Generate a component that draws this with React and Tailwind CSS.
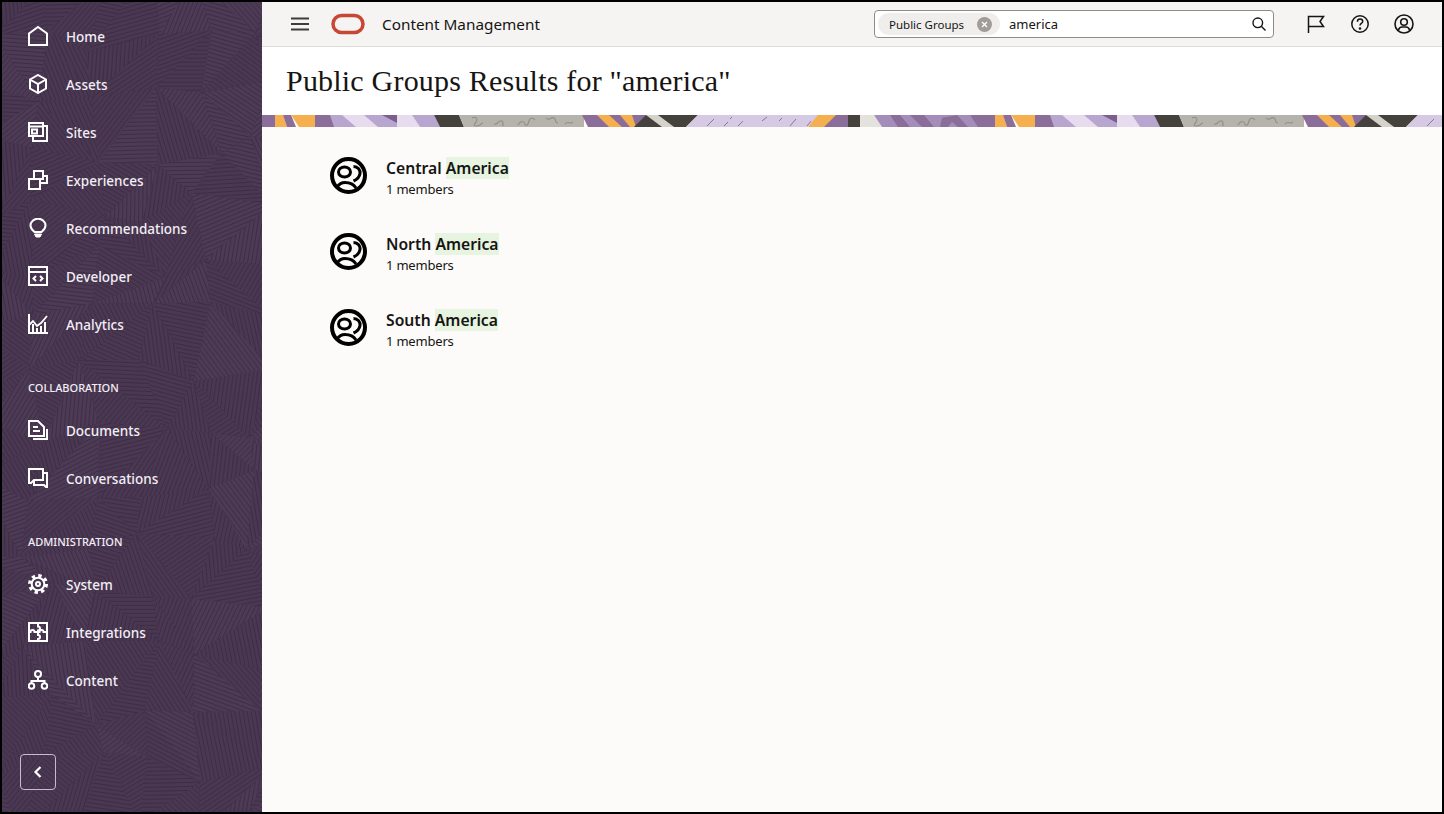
import React from "react";

// seeded so the sidebar texture is the same on every load
function makeRandom(seed) {
  let s = seed;
  return () => {
    s = (s * 16807) % 2147483647;
    return (s - 1) / 2147483646;
  };
}

function buildShards() {
  const rand = makeRandom(4711);
  const size = 56;
  const cols = 6;
  const rows = 17;
  const pts = [];
  for (let r = 0; r <= rows; r++) {
    const row = [];
    for (let c = 0; c <= cols; c++) {
      row.push([c * size - 20 + rand() * 34 - 17, r * size - 20 + rand() * 34 - 17]);
    }
    pts.push(row);
  }
  const shards = [];
  for (let r = 0; r < rows; r++) {
    for (let c = 0; c < cols; c++) {
      const a = pts[r][c];
      const b = pts[r][c + 1];
      const d = pts[r + 1][c + 1];
      const e = pts[r + 1][c];
      const tris = rand() > 0.5 ? [[a, b, d], [a, d, e]] : [[a, b, e], [b, d, e]];
      tris.forEach((t) => {
        const cx = (t[0][0] + t[1][0] + t[2][0]) / 3;
        const cy = (t[0][1] + t[1][1] + t[2][1]) / 3;
        const angle = rand() * Math.PI;
        const dx = Math.cos(angle);
        const dy = Math.sin(angle);
        const lines = [];
        for (let o = -72; o <= 72; o += 4) {
          const mx = cx - dy * o;
          const my = cy + dx * o;
          lines.push(
            `M${(mx - dx * 90).toFixed(1)} ${(my - dy * 90).toFixed(1)}L${(mx + dx * 90).toFixed(1)} ${(my + dy * 90).toFixed(1)}`
          );
        }
        shards.push({
          poly: t.map((p) => p.map((v) => v.toFixed(1)).join(",")).join(" "),
          d: lines.join(""),
          tone: rand() > 0.7 ? "#4d3b55" : "#4a3852",
        });
      });
    }
  }
  return shards;
}

const shards = buildShards();

function SidebarTexture() {
  return (
    <svg className="absolute inset-0 h-full w-full" width="260" height="810" aria-hidden="true">
      <defs>
        {shards.map((s, i) => (
          <clipPath id={`shard${i}`} key={i}>
            <polygon points={s.poly} />
          </clipPath>
        ))}
      </defs>
      {shards.map((s, i) => (
        <g key={i} clipPath={`url(#shard${i})`}>
          <polygon points={s.poly} fill={s.tone} />
          <path d={s.d} stroke="#3b2a42" strokeWidth="1" fill="none" opacity="0.8" />
        </g>
      ))}
    </svg>
  );
}

function BannerTile({ x }) {
  const purple = "#8a6d98";
  const orange = "#f6af4f";
  const lav = "#b9a6d0";
  const pale = "#e7dbee";
  const dark = "#45423d";
  const gray = "#b6b3ac";
  const mid = "#a48dbb";
  return (
    <g transform={`translate(${x} 0)`}>
      <rect x="0" y="0" width="14" height="12" fill={purple} />
      <polygon points="13,0 21,0 25,12 13,12" fill={orange} />
      <polygon points="21,0 29,0 34,12 25,12" fill={purple} />
      <polygon points="29,0 53,0 53,12 37,12" fill={orange} />
      <rect x="53" y="0" width="19" height="12" fill={purple} />
      <polygon points="68,0 82,0 96,12 72,12" fill={lav} />
      <polygon points="80,0 104,0 118,12 94,12" fill={pale} />
      <polygon points="102,0 136,0 136,12 116,12" fill={lav} />
      <polygon points="120,0 135,0 135,8" fill="#7c5f8f" />
      <polygon points="135,0 150,0 158,12 135,12" fill={pale} />
      <polygon points="150,0 172,0 178,12 158,12" fill={lav} />
      <polygon points="172,0 197,0 202,12 178,12" fill={dark} />
      <polygon points="197,0 322,0 322,12 202,12" fill={gray} />
      <path
        d="M210 3c4-2 6 1 4 4s-3 4 1 4 4-3 6-3M232 9c3 2 5-5 8-3s-2 5 2 4M256 10c3-5 6-4 7-1s3 1 4-3 5-3 6-1M284 3c3 4 5-2 8 0s0 5 4 5M303 9c3-4 5 1 8-2"
        stroke="#918e88"
        strokeWidth="1.100"
        fill="none"
      />
      <polygon points="320,0 394,0 380,12 326,12" fill={purple} />
      <polygon points="335,0 347,0 360,12 347,12" fill={orange} />
      <polygon points="358,0 370,0 374,12 368,12" fill={orange} />
      <polygon points="372,12 384,0 396,0 404,12" fill={dark} />
      <polygon points="384,0 396,0 412,12 400,12" fill="#d5d2cb" />
      <polygon points="396,0 436,0 424,12 412,12" fill={dark} />
      <polygon points="436,0 558,0 546,12 424,12" fill="#d6c9e4" />
      <path
        d="M445 11l7-7M462 11l4-4M476 11l5-5M505 2l-5 4M520 3l-3 3M528 11l6-7M545 11l4-5M470 2l-2 2"
        stroke="#8e74a3"
        strokeWidth="1"
        fill="none"
      />
      <polygon points="556,0 586,0 586,12 546,12" fill={orange} />
      <polygon points="574,0 586,0 586,12 562,12" fill={purple} />
      <rect x="586" y="0" width="12" height="12" fill={dark} />
      <polygon points="598,0 612,0 620,12 598,12" fill="#e4e2dd" />
      <polygon points="612,0 708,0 722,12 620,12" fill={mid} />
      <polygon points="628,0 638,0 648,12 636,12" fill={purple} />
      <polygon points="648,0 662,0 672,12 660,12" fill={purple} />
      <polygon points="680,3 695,0 706,12 696,12 690,7 686,12 678,12" fill={purple} />
      <polygon points="708,0 720,0 720,12 716,12" fill={purple} />
    </g>
  );
}

function Banner() {
  return (
    <svg className="block h-3 w-full" viewBox="0 0 1180 12" preserveAspectRatio="none" aria-hidden="true">
      <BannerTile x="0" />
      <BannerTile x="720" />
    </svg>
  );
}

const Nav = ({ children }) => (
  <svg width="20" height="20" viewBox="0 0 20 20" fill="none" stroke="white" strokeWidth="2" className="shrink-0">
    {children}
  </svg>
);

const icons = {
  home: <path d="M1 19V7.500L10 1l9 6.500V19z" />,
  assets: <path d="M10 1l8 4.500v9L10 19l-8-4.500v-9zM2 5.500l8 4.500 8-4.500M10 10v9" />,
  sites: (
    <>
      <path d="M1 1h14v13H1z" />
      <path d="M15 4h4v15H5v-5" />
      <path d="M1 4.500h13M4 7.500h5v4H4z" />
    </>
  ),
  experiences: (
    <>
      <path d="M1 9h11v10H1z" />
      <path d="M6 9V1h9v5h4v7h-7M12 9h3V6" />
    </>
  ),
  recommendations: (
    <>
      <path d="M6.500 14C4 12 2.500 10.500 2.500 7.500a7.500 6.800 0 0 1 15 0c0 3-1.500 4.500-4 6.500z" />
      <path d="M6.500 16h7l-1.500 3H8z" fill="white" strokeWidth="1" />
    </>
  ),
  developer: (
    <>
      <path d="M1 1h18v18H1zM1 6h18" />
      <path d="M8 10l-2.500 2.500L8 15M12 10l2.500 2.500L12 15" />
    </>
  ),
  analytics: (
    <>
      <path d="M1 0v19h19" />
      <path d="M1 11l4-4 4 5 4-3 6-7" strokeWidth="1.800" />
      <path d="M5 10v8M9 14v4M13 12v6M17 8v10" strokeWidth="2" />
    </>
  ),
  documents: (
    <>
      <path d="M1 1h9l6 6v9H1z" />
      <path d="M19 9v10H5M5 7h5M5 11h7" />
    </>
  ),
  conversations: (
    <>
      <path d="M1 1h14v11H6l-3 3H1z" />
      <path d="M15 5h4v15l-3-3H6v-5" />
    </>
  ),
  system: (
    <>
      <circle cx="10" cy="10" r="8.300" strokeWidth="3.400" strokeDasharray="3.300 3.220" />
      <circle cx="10" cy="10" r="6.300" strokeWidth="2" />
      <circle cx="10" cy="10" r="2" strokeWidth="2" />
    </>
  ),
  integrations: (
    <>
      <path d="M1 1h18v18H1z" />
      <path d="M10 1v3.500a2 2 0 0 1 0 4V10H6.500a2 2 0 0 0-4 0H1" />
      <path d="M19 10h-3.500a2 2 0 0 0-4 0H10v3a2 2 0 0 1 0 4v2" />
    </>
  ),
  content: (
    <>
      <circle cx="10" cy="4" r="3" />
      <circle cx="3.500" cy="16" r="2.800" />
      <circle cx="16.500" cy="16" r="2.800" />
      <path d="M10 7v4M3.500 13v-2h13v2" />
    </>
  ),
};

function NavItem({ icon, label }) {
  return (
    <a className="flex h-12 items-center pl-[26px] text-[13.500px] font-medium text-[#f3eef5]">
      <Nav>{icons[icon]}</Nav>
      <span className="ml-[18px] pt-[2px]">{label}</span>
    </a>
  );
}

function SectionLabel({ children, className }) {
  return (
    <div className={`pl-[26px] text-[11px] leading-4 font-medium text-[#f3eef5] ${className}`}>{children}</div>
  );
}

function GroupIcon() {
  return (
    <svg width="37" height="37" viewBox="0 0 37 37" fill="none" stroke="black" className="shrink-0">
      <circle cx="18.500" cy="18.500" r="16.500" strokeWidth="4" />
      <ellipse cx="14.500" cy="15" rx="6" ry="5" strokeWidth="3" />
      <path d="M23.500 9.500c4.500 0 7 3.500 6.500 7-.5 3.500-3 6-6.500 7.500" strokeWidth="3" />
      <path d="M7 30c2-3 4-4.500 8-4.500s8 .5 11 5.500" strokeWidth="3" />
    </svg>
  );
}

function ResultRow({ name }) {
  return (
    <div className="flex items-start gap-[19px]">
      <GroupIcon />
      <div className="pt-px">
        <div className="text-[15.700px] leading-[21px] font-semibold text-[#161513]">
          {name} <mark className="bg-[#e6f4e0] text-[#161513]">America</mark>
        </div>
        <div className="text-[13px] leading-[21px] tracking-[-0.2px] text-[#161513]">1 members</div>
      </div>
    </div>
  );
}

export default function App() {
  return (
    <div className="flex h-screen w-screen overflow-hidden border-2 border-black bg-[#fcfbfa] font-['Noto_Sans',sans-serif]">
      {/* Sidebar */}
      <aside className="relative flex w-[260px] shrink-0 flex-col bg-[#4a3852]">
        <SidebarTexture />
        <div className="relative flex h-full flex-col pt-[10px]">
          <NavItem icon="home" label="Home" />
          <NavItem icon="assets" label="Assets" />
          <NavItem icon="sites" label="Sites" />
          <NavItem icon="experiences" label="Experiences" />
          <NavItem icon="recommendations" label="Recommendations" />
          <NavItem icon="developer" label="Developer" />
          <NavItem icon="analytics" label="Analytics" />
          <SectionLabel className="mt-[32px] mb-[10px]">COLLABORATION</SectionLabel>
          <NavItem icon="documents" label="Documents" />
          <NavItem icon="conversations" label="Conversations" />
          <SectionLabel className="mt-[32px] mb-[10px]">ADMINISTRATION</SectionLabel>
          <NavItem icon="system" label="System" />
          <NavItem icon="integrations" label="Integrations" />
          <NavItem icon="content" label="Content" />
          <button className="mt-auto mb-[22px] ml-[18px] flex h-9 w-9 items-center justify-center rounded-[4px] border border-[#c9b9d2]">
            <svg width="12" height="14" viewBox="0 0 12 14" fill="none" stroke="white" strokeWidth="2.200">
              <path d="M8.500 2L3.500 7l5 5" />
            </svg>
          </button>
        </div>
      </aside>

      <div className="flex min-w-0 flex-1 flex-col">
        {/* Top bar */}
        <header className="flex h-[45px] shrink-0 items-center border-b border-[#dedcd9] bg-[#f5f4f2]">
          <svg className="ml-[29px]" width="18" height="14" viewBox="0 0 18 14" stroke="#3f3d3a" strokeWidth="2">
            <path d="M0 1.500h18M0 7h18M0 12.500h18" />
          </svg>
          <svg className="ml-[22px]" width="34" height="22" viewBox="0 0 34 22" fill="none" stroke="#c74634" strokeWidth="3.500">
            <rect x="2" y="2.500" width="30" height="17" rx="8.500" />
          </svg>
          <span className="ml-[17px] text-[15.300px] text-[#161513]">Content Management</span>
          <div className="ml-auto flex h-[28px] w-[400px] items-center rounded-[4px] border border-[#8f8c88] bg-white pr-[7px] pl-[3px]">
            <div className="flex h-[22px] w-[122px] items-center rounded-full bg-[#efeeec] pl-[11px]">
              <span className="pt-[2px] text-[11.500px] text-[#161513]">Public Groups</span>
              <span className="mr-[8px] ml-auto flex h-[15px] w-[15px] items-center justify-center rounded-full bg-[#a09d99]">
                <svg width="7" height="7" viewBox="0 0 7 7" stroke="white" strokeWidth="1.300">
                  <path d="M1 1l5 5M6 1L1 6" />
                </svg>
              </span>
            </div>
            <span className="ml-[9px] pt-[2px] text-[13px] text-[#161513]">america</span>
            <svg className="ml-auto" width="14" height="14" viewBox="0 0 14 14" fill="none" stroke="#161513" strokeWidth="1.400">
              <circle cx="5.800" cy="5.800" r="4.800" />
              <path d="M9.300 9.300L13.500 13.500" />
            </svg>
          </div>
          <div className="mr-[28px] ml-[32px] flex items-center gap-[24px]">
            <svg width="20" height="20" viewBox="0 0 20 20" fill="none" stroke="#161513" strokeWidth="1.500">
              <path d="M2.500 19V2.500h15l-3.500 5 3.500 5h-15" />
            </svg>
            <svg width="20" height="20" viewBox="0 0 20 20" fill="none" stroke="#161513" strokeWidth="1.500">
              <circle cx="10" cy="10" r="8.200" />
              <path d="M7.400 7.800c0-1.700 1.200-2.700 2.700-2.700s2.600 1 2.600 2.300c0 2-2.700 2-2.700 4" />
              <circle cx="10" cy="14.500" r=".6" fill="#161513" />
            </svg>
            <svg width="20" height="20" viewBox="0 0 20 20" fill="none" stroke="#161513" strokeWidth="1.600">
              <circle cx="10" cy="10" r="9" />
              <circle cx="10" cy="8" r="3.300" />
              <path d="M4.500 16c.5-2 2-3 3.500-3h4c1.500 0 3 1 3.500 3" />
            </svg>
          </div>
        </header>

        {/* Title */}
        <div className="flex h-[68px] shrink-0 items-center bg-white pb-[2px] pl-6">
          <h1 className="font-['Liberation_Serif',serif] text-[30px] tracking-[0.2px] text-[#161513]">
            Public Groups Results for "america"
          </h1>
        </div>
        <Banner />

        {/* Results */}
        <main className="flex flex-col gap-[33px] pt-[30px] pl-[68px]">
          <ResultRow name="Central" />
          <ResultRow name="North" />
          <ResultRow name="South" />
        </main>
      </div>
    </div>
  );
}
